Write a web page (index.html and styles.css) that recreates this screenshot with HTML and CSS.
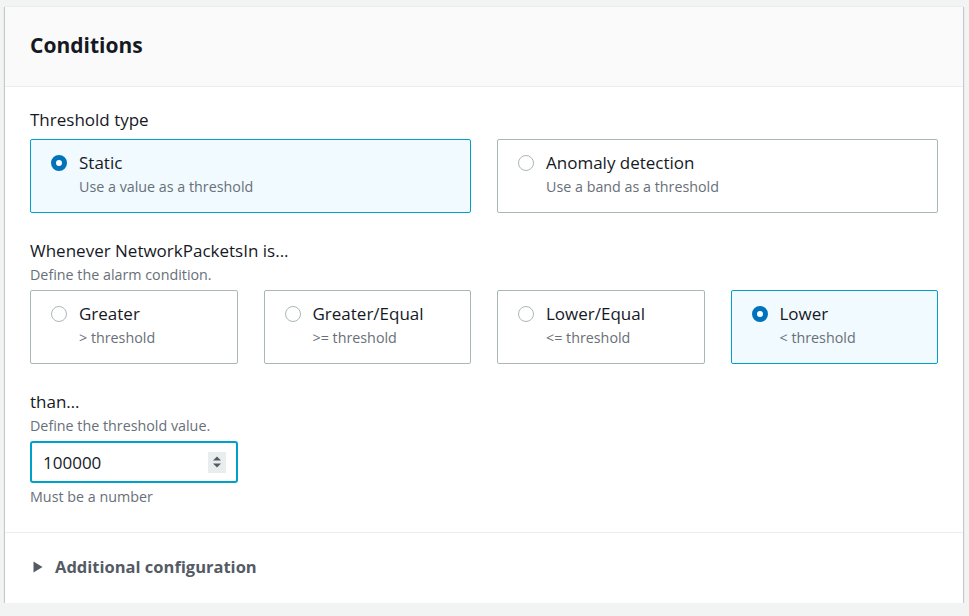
FILE: index.html
```html
<!DOCTYPE html>
<html>
<head>
<meta charset="utf-8">
<link rel="stylesheet" href="styles.css">
</head>
<body>
<div class="page">
  <section class="container">
    <header class="header"><h2 class="title">Conditions</h2></header>
    <div class="content">
      <div class="field">
        <div class="label">Threshold type</div>
        <div class="tiles two">
          <div class="tile selected">
            <span class="radio on"></span>
            <div class="tile-text"><div class="tile-label">Static</div><div class="tile-desc">Use a value as a threshold</div></div>
          </div>
          <div class="tile">
            <span class="radio"></span>
            <div class="tile-text"><div class="tile-label">Anomaly detection</div><div class="tile-desc">Use a band as a threshold</div></div>
          </div>
        </div>
      </div>
      <div class="field">
        <div class="label">Whenever NetworkPacketsIn is...</div>
        <div class="desc">Define the alarm condition.</div>
        <div class="tiles four">
          <div class="tile">
            <span class="radio"></span>
            <div class="tile-text"><div class="tile-label">Greater</div><div class="tile-desc">&gt; threshold</div></div>
          </div>
          <div class="tile">
            <span class="radio"></span>
            <div class="tile-text"><div class="tile-label">Greater/Equal</div><div class="tile-desc">&gt;= threshold</div></div>
          </div>
          <div class="tile">
            <span class="radio"></span>
            <div class="tile-text"><div class="tile-label">Lower/Equal</div><div class="tile-desc">&lt;= threshold</div></div>
          </div>
          <div class="tile selected">
            <span class="radio on"></span>
            <div class="tile-text"><div class="tile-label">Lower</div><div class="tile-desc">&lt; threshold</div></div>
          </div>
        </div>
      </div>
      <div class="field">
        <div class="label">than…</div>
        <div class="desc">Define the threshold value.</div>
        <div class="input">
          <span class="value">100000</span>
          <span class="spinner">
            <svg width="10" height="14" viewBox="0 0 10 14"><path d="M1 5.5 L5 1.5 L9 5.5 Z" fill="#545b64"/><path d="M1 8.5 L5 12.5 L9 8.5 Z" fill="#545b64"/></svg>
          </span>
        </div>
        <div class="hint">Must be a number</div>
      </div>
    </div>
    <footer class="footer">
      <svg class="caret" width="10" height="12" viewBox="0 0 10 12"><path d="M0.5 0.5 L9.5 6 L0.5 11.5 Z" fill="#545b64"/></svg>
      <span class="footer-text">Additional configuration</span>
    </footer>
  </section>
</div>
</body>
</html>
```

FILE: styles.css
```css
html, body {
  margin: 0;
  padding: 0;
  background: #f2f3f3;
  font-family: "Open Sans", "Noto Sans", Arial, sans-serif;
  color: #16191f;
}
.page {
  padding: 6px 6px 0 5px;
}
.container {
  background: #ffffff;
  box-shadow: 0 1px 1px 0 rgba(0,28,36,.3), 1px 1px 1px 0 rgba(0,28,36,.15), -1px 1px 1px 0 rgba(0,28,36,.15);
  border-top: 1px solid #eaeded;
}
.header {
  background: #fafafa;
  border-bottom: 1px solid #eaeded;
  height: 79px;
  display: flex;
  align-items: center;
  padding: 0 25px;
}
.title {
  margin: 0;
  font-size: 21px;
  font-weight: 700;
  line-height: 28px;
  margin-top: -4px;
}
.content {
  padding: 22px 25px 25px;
  border-bottom: 1px solid #eaeded;
}
.field + .field {
  margin-top: 27px;
}
.label {
  font-size: 17px;
  line-height: 22px;
  color: #16191f;
}
.desc {
  font-size: 14.3px;
  line-height: 20px;
  color: #687078;
  margin-top: 3px;
}
.tiles {
  display: grid;
  gap: 26px;
  margin-top: 8px;
}
.desc + .tiles { margin-top: 5px; }
.tiles.two { grid-template-columns: 1fr 1fr; }
.tiles.four { grid-template-columns: repeat(4, 1fr); }
.tile {
  border: 1px solid #aab7b8;
  border-radius: 2px;
  background: #fff;
  height: 74px;
  box-sizing: border-box;
  padding: 12px 16px 0 20px;
  display: flex;
  align-items: flex-start;
  gap: 12px;
}
.tile.selected {
  background: #f1faff;
  border-color: #00a1c9;
}
.radio {
  width: 16px;
  height: 16px;
  box-sizing: border-box;
  border: 1.5px solid #aab7b8;
  border-radius: 50%;
  background: #fff;
  margin-top: 3px;
  flex: none;
}
.radio.on {
  border: 5px solid #0073bb;
}
.tile-label {
  font-size: 17px;
  line-height: 22px;
}
.tile-desc {
  font-size: 14.3px;
  line-height: 20px;
  color: #687078;
  margin-top: 3px;
}
.input {
  margin-top: 5px;
  width: 208px;
  height: 42px;
  box-sizing: border-box;
  border: 2px solid #00a1c9;
  border-radius: 3px;
  display: flex;
  align-items: center;
  justify-content: space-between;
  padding: 0 10px 0 11px;
}
.value {
  font-size: 17px;
}
.spinner {
  width: 18px;
  height: 21px;
  background: #eaeded;
  display: flex;
  align-items: center;
  justify-content: center;
}
.hint {
  font-size: 14.3px;
  line-height: 20px;
  color: #687078;
  margin-top: 4px;
}
.footer {
  height: 70px;
  box-sizing: border-box;
  padding: 0 0 4px 28px;
  display: flex;
  align-items: center;
  gap: 12px;
}
.caret { margin-top: 1px; }
.footer-text {
  font-size: 16.5px;
  font-weight: 700;
  color: #545b64;
}
```
